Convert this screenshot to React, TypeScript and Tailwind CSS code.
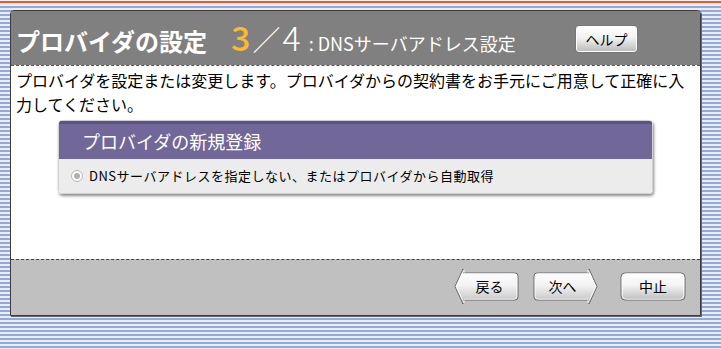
import React from "react";

const jp = { fontFamily: '"Noto Sans CJK JP", "Noto Sans", sans-serif' };

function ArrowButton({ label, dir, width }: { label: string; dir: "left" | "right" | "none"; width: number }) {
  const h = 37;
  const w = width;
  let path = "";
  if (dir === "left") {
    path = `M1 ${h / 2} L9 1 L9 5 L${w - 4} 5 Q${w - 1} 5 ${w - 1} 8 L${w - 1} ${h - 8} Q${w - 1} ${h - 5} ${w - 4} ${h - 5} L9 ${h - 5} L9 ${h - 1} Z`;
  } else if (dir === "right") {
    path = `M${w - 1} ${h / 2} L${w - 9} 1 L${w - 9} 5 L4 5 Q1 5 1 8 L1 ${h - 8} Q1 ${h - 5} 4 ${h - 5} L${w - 9} ${h - 5} L${w - 9} ${h - 1} Z`;
  } else {
    path = `M5 5 L${w - 5} 5 Q${w - 1} 5 ${w - 1} 9 L${w - 1} ${h - 9} Q${w - 1} ${h - 5} ${w - 5} ${h - 5} L5 ${h - 5} Q1 ${h - 5} 1 ${h - 9} L1 9 Q1 5 5 5 Z`;
  }
  const gid = `g-${label}`;
  return (
    <div className="relative flex items-center justify-center" style={{ width: w, height: h }}>
      <svg className="absolute inset-0" width={w} height={h} viewBox={`0 0 ${w} ${h}`}>
        <defs>
          <linearGradient id={gid} x1="0" y1="0" x2="0" y2="1">
            <stop offset="0" stopColor="#ffffff" />
            <stop offset="0.45" stopColor="#f4f4f4" />
            <stop offset="1" stopColor="#bdbdbd" />
          </linearGradient>
        </defs>
        <path d={path} fill={`url(#${gid})`} stroke="#6a6a6a" strokeWidth="1" strokeLinejoin="round" />
        <path d={path} fill="none" stroke="#ffffff" strokeWidth="1" transform={`translate(${w * 0.02} 1) scale(0.96 0.945)`} opacity="0.8" />
      </svg>
      <span className={`relative text-[14px] text-black ${dir === "left" ? "pl-[6px]" : dir === "right" ? "pr-[6px]" : ""}`} style={jp}>
        {label}
      </span>
    </div>
  );
}

export default function App() {
  return (
    <div
      className="w-[721px] h-[349px] overflow-hidden bg-[repeating-linear-gradient(to_bottom,#e9edf6_0px,#e9edf6_2px,#93a9d9_2px,#93a9d9_4px)]"
      style={jp}
    >
      <div className="h-[1px] bg-[#f4f4f4]" />
      <div className="h-[2px] bg-[#f05a2a]" />
      <div className="h-[1px] bg-[#e9edf6]" />
      <div className="pt-[6px] pl-[10px]">
        <div className="w-[691px] h-[306px] flex flex-col rounded-tr-[4px] rounded-tl-[4px] border border-[#3c3c3c] shadow-[1px_1px_0_#666] overflow-hidden">
          {/* header */}
          <div className="h-[54px] shrink-0 bg-[#808080] flex items-center pl-[5px] pr-[62px] relative">
            <div className="flex items-baseline text-white mt-[2px]">
              <span className="text-[24px] font-bold">プロバイダの設定</span>
              <span className="ml-[24px] text-[34px] leading-none text-[#fbb830] font-medium">3</span>
              <span className="ml-[2px] text-[28px] leading-none font-light">／</span>
              <span className="ml-[2px] text-[34px] leading-none font-light">4</span>
              <span className="ml-[8px] text-[18px]">: DNSサーバアドレス設定</span>
            </div>
            <div className="ml-auto w-[63px] h-[28px] mt-[2px] rounded-[4px] border border-[#777] shadow-[inset_0_0_0_1px_#fff] bg-[linear-gradient(to_bottom,#ffffff,#f2f2f2_45%,#b9b9b9)] flex items-center justify-center text-[14px] text-black">
              ヘルプ
            </div>
          </div>
          {/* content */}
          <div className="flex-1 bg-white border-t border-dashed border-[#555] pt-[2px] pl-[5px]">
            <p className="text-[16px] leading-[24px] text-black">
              プロバイダを設定または変更します。プロバイダからの契約書をお手元にご用意して正確に入力してください。
            </p>
            <div className="ml-[42px] mt-[4px] w-[595px] rounded-[4px] overflow-hidden shadow-[1px_2px_3px_rgba(0,0,0,0.45)] border border-[#d0d0d0]">
              <div className="h-[38px] bg-[#716799] border-t-[3px] border-[#5c5284] flex items-center pl-[23px] text-white text-[18px]">
                プロバイダの新規登録
              </div>
              <div className="h-[34px] bg-[#ececec] flex items-center pl-[12px] text-[13px] tracking-[0.5px] text-black">
                <span className="w-[12px] h-[12px] rounded-full border border-[#b8b8b8] bg-white flex items-center justify-center mr-[6px]">
                  <span className="w-[6px] h-[6px] rounded-full bg-[#b0b0b0]" />
                </span>
                DNSサーバアドレスを指定しない、またはプロバイダから自動取得
              </div>
            </div>
          </div>
          {/* footer */}
          <div className="h-[56px] shrink-0 bg-[#c0c0c0] border-t border-dashed border-[#444] flex items-center justify-end pr-[14px] pb-[2px]">
            <ArrowButton label="戻る" dir="left" width={65} />
            <div className="w-[14px]" />
            <ArrowButton label="次へ" dir="right" width={65} />
            <div className="w-[22px]" />
            <ArrowButton label="中止" dir="none" width={66} />
          </div>
        </div>
      </div>
    </div>
  );
}
